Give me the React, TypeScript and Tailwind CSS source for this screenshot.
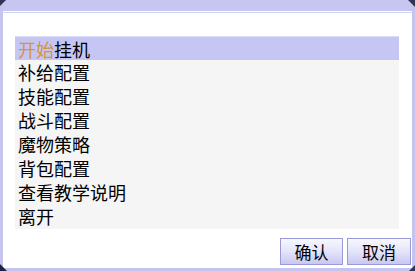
import React from "react";

const items = ["补给配置", "技能配置", "战斗配置", "魔物策略", "背包配置", "查看教学说明", "离开"];

export default function App() {
  const font = { fontFamily: '"Noto Sans CJK SC", "Noto Sans", sans-serif' };
  return (
    <div className="relative w-[415px] h-[271px] bg-white overflow-hidden" style={font}>
      <div className="absolute inset-0 border-l-[3px] border-r-[3px] border-b-[3px] border-[#c4c4ee] pointer-events-none" />
      <div className="flex flex-col h-full">
        <div className="h-[11px] bg-[#c6c6f0]" />
        <div className="h-[1px] bg-white" />
        <div className="h-[1px] bg-[#d4d4f4] mx-[3px]" />
        <div className="pl-[15px] pt-[23px]">
          <div className="w-[384px] h-[193px] bg-[#f5f5f5] flex flex-col">
            <div className="h-[24px] bg-[#c6c6f4] border-t border-[#dcdcf8] flex items-center pl-[3px] text-[18px] leading-none">
              <span className="text-[#d4963a]">开始</span>
              <span className="text-black">挂机</span>
            </div>
            {items.map((t) => (
              <div key={t} className="h-[24px] flex items-center pl-[3px] text-[18px] leading-none text-black">
                {t}
              </div>
            ))}
          </div>
        </div>
        <div className="flex justify-end gap-[4px] pr-[4px] pt-[9px]">
          <button className="w-[63px] h-[27px] border border-[#9a9ad8] bg-gradient-to-b from-[#f8f8ff] via-[#e4e4fa] to-[#c8c8f0] text-[17px] leading-none text-black flex items-center justify-center">
            确认
          </button>
          <button className="w-[64px] h-[27px] border border-[#9a9ad8] bg-gradient-to-b from-[#f8f8ff] via-[#e4e4fa] to-[#c8c8f0] text-[17px] leading-none text-black flex items-center justify-center">
            取消
          </button>
        </div>
      </div>
      <div className="absolute left-0 top-0 w-0 h-0 border-t-[6px] border-r-[6px] border-t-[#333355] border-r-transparent" />
      <div className="absolute right-0 top-0 w-0 h-0 border-t-[7px] border-l-[7px] border-t-[#333355] border-l-transparent" />
      <div className="absolute left-0 bottom-0 w-0 h-0 border-b-[7px] border-r-[7px] border-b-[#222244] border-r-transparent" />
      <div className="absolute right-0 bottom-0 w-0 h-0 border-b-[6px] border-l-[6px] border-b-[#333355] border-l-transparent" />
    </div>
  );
}
